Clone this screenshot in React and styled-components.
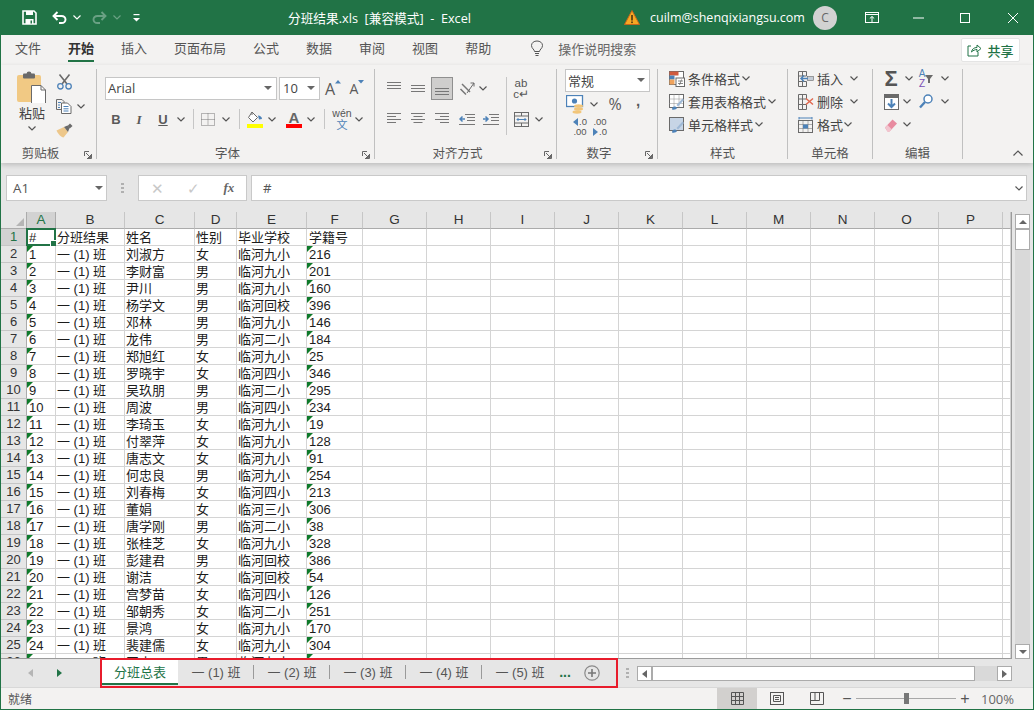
import React from "react";
import styled, { createGlobalStyle } from "styled-components";

const GREEN = "#217346";
const BLUE = "#4d82b8";
const GRAY = "#6a6a6a";

const GlobalStyle = createGlobalStyle`
  html, body { margin: 0; padding: 0; background: #fff; }
  * { box-sizing: border-box; }
`;

const Window = styled.div`
  width: 1034px;
  height: 710px;
  border: 1px solid ${GREEN};
  border-top: none;
  display: flex;
  flex-direction: column;
  overflow: hidden;
  background: #e6e6e6;
  font-family: "Open Sans", "Noto Sans CJK SC", sans-serif;
  color: #444;
`;

/* title bar */
const TitleBar = styled.div`
  height: 35px;
  flex: none;
  background: ${GREEN};
  color: #fff;
  display: flex;
  align-items: center;
  padding-left: 21px;
`;

const Slot = styled.div`
  width: ${(p) => p.$w}px;
  margin-left: ${(p) => p.$ml || 0}px;
  padding-bottom: ${(p) => p.$pb || 0}px;
  flex: none;
  display: flex;
  align-items: center;
  justify-content: center;
  height: ${(p) => (p.$h ? `${p.$h}px` : "auto")};
`;

const TitleText = styled.div`
  margin-left: 148px;
  width: 336px;
  font-size: 12.7px;
  white-space: pre;
`;

const Email = styled.div`
  width: 163px;
  margin-left: 10px;
  font-size: 12.5px;
  white-space: nowrap;
`;

const Avatar = styled.div`
  width: 24px;
  height: 24px;
  border-radius: 50%;
  background: #d2d2d2;
  color: #666;
  font-size: 12px;
  display: flex;
  align-items: center;
  justify-content: center;
`;

/* tabs */
const TabRow = styled.div`
  height: 30px;
  flex: none;
  background: #f3f2f1;
  display: flex;
  align-items: flex-start;
  padding-left: 14px;
  gap: 27px;
  font-size: 13px;
  font-family: "Noto Sans CJK SC", sans-serif;
`;

const TabItem = styled.div`
  height: 27px;
  line-height: 20px;
  padding-top: 3px;
  white-space: nowrap;
  color: ${(p) => (p.$active ? "#333" : "#555")};
  font-weight: ${(p) => (p.$active ? 700 : 400)};
  border-bottom: 2px solid ${(p) => (p.$active ? GREEN : "transparent")};
`;

const SearchHint = styled.div`
  display: flex;
  align-items: center;
  gap: 14px;
  margin-left: 12px;
  height: 27px;
  color: #666;
  white-space: nowrap;
`;

const ShareButton = styled.div`
  margin: 3px 13px 0 auto;
  width: 59px;
  height: 24px;
  background: #fff;
  border: 1px solid #e4e4e4;
  border-radius: 2px;
  display: flex;
  align-items: center;
  justify-content: center;
  gap: 5px;
  color: ${GREEN};
  font-weight: 500;
`;

/* ribbon */
const Ribbon = styled.div`
  height: 98px;
  flex: none;
  background: #f3f2f1;
  display: flex;
  padding-top: 4px;
  position: relative;
  z-index: 2;
  box-shadow: 0 2px 5px rgba(0, 0, 0, 0.18);
  font-family: "Noto Sans CJK SC", sans-serif;
`;

const Group = styled.div`
  width: ${(p) => p.$w}px;
  height: 90px;
  flex: none;
  display: flex;
  flex-direction: column;
  border-right: 1px solid #c0c0c0;
`;

const GroupBody = styled.div`
  flex: 1;
  display: flex;
  padding: ${(p) => p.$pt || 0}px 0 0 ${(p) => p.$pl || 0}px;
  min-height: 0;
`;

const GroupFooter = styled.div`
  height: 12px;
  display: flex;
  align-items: center;
`;

const GroupLabel = styled.div`
  flex: 1;
  text-align: center;
  font-size: 12.5px;
  line-height: 12px;
  color: #555;
`;

const Launcher = styled.div`
  width: 16px;
  height: 12px;
  display: flex;
  align-items: flex-end;
  justify-content: center;
`;

const Column = styled.div`
  display: flex;
  flex-direction: column;
  gap: ${(p) => p.$gap || 0}px;
  width: ${(p) => (p.$w ? `${p.$w}px` : "auto")};
  margin-left: ${(p) => p.$ml || 0}px;
  margin-top: ${(p) => p.$mt || 0}px;
  flex: none;
`;

const ToolRow = styled.div`
  display: flex;
  align-items: center;
  height: ${(p) => p.$h}px;
  flex: none;
`;

const Selector = styled.div`
  width: ${(p) => p.$w}px;
  height: 23px;
  margin-left: ${(p) => p.$ml || 0}px;
  background: #fff;
  border: 1px solid #c6c6c6;
  display: flex;
  align-items: center;
  justify-content: space-between;
  padding: 0 4px 1px ${(p) => p.$pl || 2}px;
  font-family: ${(p) => (p.$latin ? '"Open Sans", sans-serif' : '"Noto Sans CJK SC", sans-serif')};
  font-size: 13px;
  color: #444;
  flex: none;
`;

const PasteLabel = styled.div`
  font-size: 13px;
  line-height: 16px;
  color: #444;
  text-align: center;
`;

const Glyph = styled.span`
  font-family: ${(p) => p.$font || '"Liberation Sans", sans-serif'};
  font-size: ${(p) => p.$size || 13}px;
  font-weight: ${(p) => p.$weight || 400};
  font-style: ${(p) => (p.$italic ? "italic" : "normal")};
  text-decoration: ${(p) => (p.$under ? "underline" : "none")};
  color: ${(p) => p.$color || "#5a5a5a"};
  line-height: 1;
`;

const ColorGlyph = styled.div`
  display: flex;
  flex-direction: column;
  align-items: center;
  width: 16px;
  line-height: 13px;
  font-family: "Liberation Sans", sans-serif;
  font-weight: 700;
  font-size: 15px;
  color: #666;
  border-bottom: 4px solid ${(p) => p.$bar};
`;

const StackGlyph = styled.div`
  display: flex;
  flex-direction: column;
  align-items: center;
  line-height: ${(p) => p.$lh || 9}px;
  font-size: ${(p) => p.$size || 11}px;
  font-family: "Liberation Sans", sans-serif;
  color: #555;
`;

const ActiveTool = styled.div`
  width: 22px;
  height: 23px;
  background: #cfcecd;
  border: 1px solid #8f8f8f;
  display: flex;
  align-items: center;
  justify-content: center;
`;

const VSep = styled.div`
  width: 1px;
  height: ${(p) => p.$h}px;
  background: #c6c6c6;
  margin: ${(p) => p.$mt || 0}px 0 0 ${(p) => p.$ml || 0}px;
  flex: none;
`;

const CommandRow = styled.div`
  height: 23px;
  display: flex;
  align-items: center;
  font-size: 13px;
  color: #444;
  white-space: nowrap;
`;

const CommandLabel = styled.span`
  margin-left: ${(p) => p.$ml || 4}px;
  margin-right: ${(p) => p.$mr || 2}px;
`;

const CollapseSlot = styled.div`
  flex: 1;
  display: flex;
  justify-content: flex-end;
  align-items: flex-end;
  padding: 0 10px 3px 0;
  height: 90px;
`;

/* formula bar */
const FormulaBar = styled.div`
  height: 49px;
  flex: none;
  display: flex;
  align-items: flex-start;
  padding: 12px 0 0 5px;
  background: #e6e6e6;
  font-family: "Open Sans", sans-serif;
  font-size: 13.3px;
`;

const FormulaBox = styled.div`
  height: 26px;
  width: ${(p) => p.$w}px;
  margin-left: ${(p) => p.$ml || 0}px;
  background: #fff;
  border: 1px solid #c9c9c9;
  display: flex;
  align-items: center;
  justify-content: ${(p) => (p.$around ? "space-around" : "space-between")};
  padding: 0 ${(p) => (p.$around ? 0 : 3)}px 0 ${(p) => (p.$around ? 0 : p.$pl || 6)}px;
  flex: none;
  color: #555;
`;

const FxText = styled.span`
  font-family: "Liberation Serif", serif;
  font-style: italic;
  font-weight: 700;
  font-size: 13px;
  color: #666;
`;

/* sheet */
const SheetRow = styled.div`
  height: 447px;
  flex: none;
  display: flex;
`;

const Sheet = styled.div`
  width: 1011px;
  height: 447px;
  flex: none;
  overflow: hidden;
  background: #fff;
  border-right: 1px solid #9b9b9b;
  border-bottom: 1px solid #9b9b9b;
  display: grid;
  grid-template-columns: 26px 29px 69px 70px 42px 70px 56px repeat(10, 64px) 8px;
  grid-auto-rows: 17px;
  align-content: start;
  font-family: "Liberation Sans", "Noto Sans CJK SC", sans-serif;
  font-size: 13px;
  color: #1c1c1c;
`;

const ColHead = styled.div`
  background: ${(p) => (p.$on ? "#d2d2d2" : "#e6e6e6")};
  color: ${(p) => (p.$on ? GREEN : "#333")};
  border-right: 1px solid ${(p) => (p.$on ? "#ababab" : "#c6c6c6")};
  border-bottom: 1px solid ${(p) => (p.$on ? GREEN : "#ababab")};
  font-size: 13.5px;
  line-height: 16px;
  text-align: center;
  font-family: "Liberation Sans", sans-serif;
`;

const Corner = styled.div`
  background: #e6e6e6;
  border-right: 1px solid #ababab;
  border-bottom: 1px solid #ababab;
  display: flex;
  align-items: flex-end;
  justify-content: flex-end;
  padding: 0 2px 2px 0;
`;

const RowHead = styled.div`
  background: ${(p) => (p.$on ? "#d2d2d2" : "#e6e6e6")};
  color: ${(p) => (p.$on ? GREEN : "#333")};
  border-right: 1px solid #ababab;
  border-bottom: 1px solid #c6c6c6;
  font-size: 13px;
  line-height: 16px;
  text-align: center;
  font-family: "Liberation Sans", sans-serif;
`;

const Cell = styled.div`
  position: relative;
  border-right: 1px solid #d4d4d4;
  border-bottom: 1px solid #d4d4d4;
  line-height: 17px;
  padding-left: ${(p) => p.$pad || 1}px;
  white-space: nowrap;
  overflow: visible;
  ${(p) =>
    p.$note &&
    `&::before {
      content: "";
      position: absolute;
      left: 0;
      top: 0;
      border-style: solid;
      border-width: 6px 6px 0 0;
      border-color: #0e7a2a transparent transparent transparent;
    }`}
`;

const SelectionBox = styled.div`
  position: absolute;
  left: -1px;
  top: -1px;
  width: 30px;
  height: 18px;
  border: 2px solid ${GREEN};
  &::after {
    content: "";
    position: absolute;
    right: -3px;
    bottom: -3px;
    width: 5px;
    height: 5px;
    background: ${GREEN};
    border: 1px solid #fff;
  }
`;

const VScroll = styled.div`
  width: 21px;
  flex: none;
  display: flex;
  flex-direction: column;
  padding: 2px 0 0 3px;
  background: #e6e6e6;
`;

const ScrollBtn = styled.div`
  width: 15px;
  height: 15px;
  background: #fff;
  border: 1px solid #ababab;
  display: flex;
  align-items: center;
  justify-content: center;
  flex: none;
`;

const VTrack = styled.div`
  width: 15px;
  height: 416px;
  background: #d9d9d9;
`;

const VThumb = styled.div`
  width: 15px;
  height: 21px;
  background: #fff;
  border: 1px solid #ababab;
`;

/* sheet tabs */
const TabBar = styled.div`
  height: 28px;
  flex: none;
  display: flex;
  align-items: flex-start;
  background: #e6e6e6;
`;

const TabNav = styled.div`
  width: 99px;
  height: 28px;
  display: flex;
  align-items: center;
  padding-left: 27px;
  gap: 24px;
  flex: none;
`;

const TabStrip = styled.div`
  width: 518px;
  height: 30px;
  margin-top: -1px;
  border: 2px solid #e81c2c;
  position: relative;
  z-index: 3;
  display: flex;
  align-items: flex-start;
  flex: none;
  font-family: "Liberation Sans", "Noto Sans CJK SC", sans-serif;
  font-size: 13px;
  color: #555;
`;

const SheetTab = styled.div`
  width: ${(p) => p.$w || 76}px;
  height: 25px;
  flex: none;
  display: flex;
  align-items: center;
  justify-content: center;
  background: ${(p) => (p.$active ? "#fff" : "transparent")};
  color: ${(p) => (p.$active ? GREEN : "#555")};
  border-bottom: 2px solid ${(p) => (p.$active ? GREEN : "transparent")};
  white-space: pre;
  position: relative;
  ${(p) =>
    p.$sep &&
    `&::after {
      content: "";
      position: absolute;
      right: 0;
      top: 5px;
      width: 1px;
      height: 14px;
      background: #9a9a9a;
    }`}
`;

const MoreTabs = styled.div`
  width: 14px;
  height: 25px;
  text-align: center;
  font-weight: 700;
  font-size: 14px;
  line-height: 24px;
  color: ${GREEN};
  flex: none;
`;

const AddSheet = styled.div`
  width: 40px;
  height: 25px;
  display: flex;
  align-items: center;
  justify-content: center;
  flex: none;
`;

const Grip = styled.div`
  width: 19px;
  height: 28px;
  display: flex;
  align-items: center;
  justify-content: center;
  flex: none;
`;

const HScroll = styled.div`
  display: flex;
  width: 375px;
  height: 15px;
  margin-top: 7px;
  flex: none;
`;

const HThumb = styled.div`
  width: 323px;
  height: 15px;
  background: #fff;
  border: 1px solid #ababab;
`;

const HTrack = styled.div`
  width: 22px;
  height: 15px;
  background: #d9d9d9;
`;

/* status bar */
const StatusBar = styled.div`
  height: 22px;
  flex: none;
  background: #f3f2f1;
  border-top: 1px solid #d8d8d8;
  display: flex;
  align-items: center;
  font-family: "Noto Sans CJK SC", sans-serif;
  font-size: 12px;
  color: #555;
  padding-left: 7px;
`;

const StatusText = styled.div`
  width: 709px;
  flex: none;
`;

const ViewBtn = styled.div`
  width: 40px;
  height: 21px;
  display: flex;
  align-items: center;
  justify-content: center;
  background: ${(p) => (p.$on ? "#d2d0ce" : "transparent")};
  flex: none;
`;

const ZoomTrack = styled.div`
  width: 100px;
  height: 1px;
  background: #a8a8a8;
  margin-left: 2px;
  flex: none;
  display: flex;
  align-items: center;
  justify-content: center;
`;

const ZoomKnob = styled.div`
  width: 5px;
  height: 11px;
  background: #777;
  flex: none;
`;

const ZoomGlyph = styled.div`
  width: 14px;
  text-align: center;
  font-family: "Liberation Sans", sans-serif;
  font-size: 16px;
  line-height: 16px;
  color: #555;
  margin-left: ${(p) => p.$ml || 0}px;
  flex: none;
`;

const ZoomValue = styled.div`
  margin-left: 9px;
  font-family: "Open Sans", sans-serif;
  font-size: 13px;
  color: #666;
`;

const TinyArrow = styled.svg`
  align-self: flex-start;
  margin-top: 3px;
  flex: none;
`;

/* icons */
const Chevron = ({ color = "#555" }) => (
  <svg width="8" height="5" viewBox="0 0 8 5">
    <polyline points="0.5,0.5 4,4 7.5,0.5" fill="none" stroke={color} strokeWidth="1.2" />
  </svg>
);

const Caret = ({ color = "#666", up }) => (
  <svg width="8" height="4" viewBox="0 0 8 4">
    <polygon points={up ? "0,4 8,4 4,0" : "0,0 8,0 4,4"} fill={color} />
  </svg>
);

const SideArrow = ({ color = "#666", left }) => (
  <svg width="5" height="8" viewBox="0 0 5 8">
    <polygon points={left ? "5,0 5,8 0,4" : "0,0 0,8 5,4"} fill={color} />
  </svg>
);

const DialogIcon = () => (
  <svg width="8" height="8" viewBox="0 0 8 8">
    <path d="M7.5 3V7.5H3M0.5 0.5H5M0.5 0.5V5M2 2L6.5 6.5M6.5 4V6.5H4" fill="none" stroke="#666" strokeWidth="1" />
  </svg>
);

const SaveIcon = () => (
  <svg width="15" height="15" viewBox="0 0 15 15">
    <path d="M1 1H12L14 3V14H1Z" fill="none" stroke="#fff" strokeWidth="1.6" />
    <rect x="4" y="1" width="7" height="4" fill="#fff" />
    <rect x="3.5" y="9" width="8" height="5" fill="#fff" />
    <rect x="8.5" y="10.5" width="1.5" height="3" fill={GREEN} />
  </svg>
);

const UndoIcon = ({ color = "#fff", flip }) => (
  <svg width="15" height="13" viewBox="0 0 15 13" transform={flip ? "scale(-1 1)" : undefined}>
    <path d="M2 5H9.5C12 5 13.5 6.5 13.5 8.5C13.5 10.5 12 12 9.5 12H7" fill="none" stroke={color} strokeWidth="1.9" />
    <path d="M5.5 1L1.5 5L5.5 9" fill="none" stroke={color} strokeWidth="1.9" />
  </svg>
);

const QuickIcon = () => (
  <svg width="7" height="8" viewBox="0 0 7 8">
    <rect x="0.5" y="0" width="6" height="1.2" fill="#fff" />
    <polygon points="0,4 7,4 3.5,7.5" fill="#fff" />
  </svg>
);

const WarnIcon = () => (
  <svg width="16" height="15" viewBox="0 0 16 15">
    <polygon points="8,0.5 15.5,14.5 0.5,14.5" fill="#f7a823" stroke="#c8661b" strokeWidth="1" />
    <rect x="7.2" y="5" width="1.6" height="5.5" fill="#4a3410" />
    <rect x="7.2" y="11.5" width="1.6" height="1.6" fill="#4a3410" />
  </svg>
);

const RibbonToggleIcon = () => (
  <svg width="14" height="11" viewBox="0 0 14 11">
    <rect x="0.5" y="0.5" width="13" height="10" fill="none" stroke="#fff" />
    <path d="M1 2.5H13M7 10V4.5M4.8 6.5L7 4.5L9.2 6.5" fill="none" stroke="#fff" />
  </svg>
);

const MinIcon = () => (
  <svg width="12" height="2" viewBox="0 0 12 2">
    <rect width="11" height="1" y="0.5" fill="#fff" />
  </svg>
);

const MaxIcon = () => (
  <svg width="10" height="10" viewBox="0 0 10 10">
    <rect x="0.5" y="0.5" width="9" height="9" fill="none" stroke="#fff" />
  </svg>
);

const CloseIcon = () => (
  <svg width="12" height="12" viewBox="0 0 12 12">
    <path d="M1 1L11 11M11 1L1 11" stroke="#fff" strokeWidth="1" />
  </svg>
);

const BulbIcon = () => (
  <svg width="14" height="17" viewBox="0 0 14 17">
    <path d="M4.5 11.5C4.5 9.5 1.5 8.5 1.5 5.5C1.5 2.8 4 1 7 1C10 1 12.5 2.8 12.5 5.5C12.5 8.5 9.5 9.5 9.5 11.5Z" fill="none" stroke="#555" />
    <path d="M5 13.5H9M5.5 15.5H8.5" stroke="#555" />
  </svg>
);

const ShareIcon = () => (
  <svg width="15" height="14" viewBox="0 0 15 14">
    <path d="M4 3H1V13H11V9" fill="none" stroke={GREEN} />
    <path d="M4.5 9C5 6 7 4.5 10 4.5V2L14 5.5L10 9V6.5C8 6.5 6 7.5 4.5 9Z" fill="none" stroke={GREEN} />
  </svg>
);

const PasteIcon = () => (
  <svg width="30" height="32" viewBox="0 0 30 32">
    <rect x="0" y="4" width="24" height="27" rx="2" fill="#f1c984" />
    <rect x="6" y="2.5" width="12" height="5" rx="1" fill={GRAY} />
    <circle cx="12" cy="2.8" r="2.4" fill={GRAY} />
    <path d="M14.5 14.5H24L28.5 19V32.5H14.5Z" fill="#fff" stroke={GRAY} />
    <path d="M24 14.5V19H28.5" fill="none" stroke={GRAY} />
  </svg>
);

const ScissorsIcon = () => (
  <svg width="15" height="16" viewBox="0 0 15 16">
    <path d="M2.5 0.5L10 10M12.5 0.5L5 10" stroke={GRAY} strokeWidth="1.6" />
    <circle cx="3.4" cy="12.3" r="2.7" fill="none" stroke={BLUE} strokeWidth="1.3" />
    <circle cx="11.6" cy="12.3" r="2.7" fill="none" stroke={BLUE} strokeWidth="1.3" />
  </svg>
);

const CopyIcon = () => (
  <svg width="16" height="15" viewBox="0 0 16 15">
    <path d="M5 10.5H0.5V0.5H6L8 2.5V4" fill="#f3f2f1" stroke={GRAY} />
    <path d="M5.5 4H11.5L15 7.5V14.5H5.5Z" fill="#fff" stroke={GRAY} />
    <path d="M2 3.5H5M2 6H4M2 8.5H4M7.5 7.5H12.5M7.5 9.8H12.5M7.5 12H12.5" stroke={BLUE} />
  </svg>
);

const BrushIcon = () => (
  <svg width="17" height="15" viewBox="0 0 17 15">
    <path d="M0.5 7.5L8 4L12 9L7.5 14.5C5 14 2 11 0.5 7.5Z" fill="#edc78a" />
    <path d="M8 4L11.5 2.5L13.5 5L12 9Z" fill={GRAY} />
    <path d="M11.5 3L14 0.5L16.5 3L13.8 5.5Z" fill={GRAY} />
  </svg>
);

const BorderIcon = () => (
  <svg width="14" height="13" viewBox="0 0 14 13">
    <path d="M0.5 0.5H13.5V12.5H0.5ZM7 0.5V12.5M0.5 6.5H13.5" fill="none" stroke="#777" strokeDasharray="1 1" />
  </svg>
);

const FillIcon = () => (
  <svg width="16" height="13" viewBox="0 0 16 13">
    <path d="M5 1L10.5 6.5L6 11L1.5 6.5Z" fill="#fff" stroke={GRAY} />
    <path d="M5 1V4" stroke={GRAY} />
    <path d="M11 4.5C13 4.5 15 6 15 8L12 8.5Z" fill={BLUE} />
  </svg>
);

const TinyUpA = ({ down }) => (
  <TinyArrow width="6" height="4" viewBox="0 0 6 4">
    <polygon points={down ? "0,0 6,0 3,3.5" : "0,3.5 6,3.5 3,0"} fill={BLUE} />
  </TinyArrow>
);

const alignSets = {
  top: [[0, 14, 1.5], [0, 14, 4.5], [0, 14, 7.5]],
  middle: [[0, 14, 4.5], [0, 14, 7.5], [0, 14, 10.5]],
  bottom: [[0, 14, 7.5], [0, 14, 10.5], [0, 14, 13.5]],
  left: [[0, 14, 1.5], [0, 9, 4.5], [0, 14, 7.5], [0, 9, 10.5]],
  center: [[0, 14, 1.5], [2.5, 11.5, 4.5], [0, 14, 7.5], [2.5, 11.5, 10.5]],
  right: [[0, 14, 1.5], [5, 14, 4.5], [0, 14, 7.5], [5, 14, 10.5]],
};

const AlignIcon = ({ kind }) => (
  <svg width="14" height="15" viewBox="0 0 14 15">
    {alignSets[kind].map(([a, b, y]) => (
      <line key={y} x1={a} x2={b} y1={y} y2={y} stroke="#777" />
    ))}
  </svg>
);

const OrientIcon = () => (
  <svg width="16" height="16" viewBox="0 0 16 16">
    <path d="M3 3L11 11M1.5 8L7 13.5" stroke="#777" strokeWidth="1.5" fill="none" />
    <path d="M8 12L15 2M11.5 2H15V5.5" stroke={GRAY} fill="none" />
  </svg>
);

const IndentIcon = ({ out }) => (
  <svg width="16" height="13" viewBox="0 0 16 13">
    <path d="M6 1.5H16M8 4.5H16M8 7.5H16M0 11.5H16" stroke="#777" />
    <path d={out ? "M6 6H1M3.5 3.5L1 6L3.5 8.5" : "M0 6H5M2.5 3.5L5 6L2.5 8.5"} stroke={BLUE} strokeWidth="1.5" fill="none" />
  </svg>
);

const MergeIcon = () => (
  <svg width="15" height="15" viewBox="0 0 15 15">
    <rect x="0.5" y="0.5" width="14" height="14" fill="none" stroke={GRAY} />
    <path d="M0.5 4H14.5M0.5 11H14.5M7.5 0.5V4M7.5 11V14.5" stroke={GRAY} />
    <path d="M3 7.5H12M4.5 6L3 7.5L4.5 9M10.5 6L12 7.5L10.5 9" stroke={BLUE} fill="none" />
  </svg>
);

const CurrencyIcon = () => (
  <svg width="19" height="19" viewBox="0 0 19 19">
    <rect x="0.5" y="0.5" width="16" height="11" fill="#fff" stroke={BLUE} strokeWidth="1.3" />
    <circle cx="8.5" cy="6" r="2.6" fill={BLUE} />
    <ellipse cx="12.5" cy="11" rx="4.5" ry="1.7" fill="#f2c67a" />
    <ellipse cx="12.5" cy="14" rx="4.5" ry="1.7" fill="#f2c67a" />
    <ellipse cx="11" cy="17" rx="4.5" ry="1.7" fill="#f2c67a" />
  </svg>
);

const DecimalLine = styled.span`
  display: flex;
  align-items: center;
  gap: 1px;
`;

const DecimalIcon = ({ more }) => (
  <StackGlyph $size={9.5} $lh={10}>
    <DecimalLine>
      {more ? null : <SideArrow color={BLUE} left />}
      {more ? ".00" : ".0"}
    </DecimalLine>
    <DecimalLine>
      {more ? <SideArrow color={BLUE} /> : null}
      {more ? ".0" : ".00"}
    </DecimalLine>
  </StackGlyph>
);

const StyleIcon = ({ kind }) => (
  <svg width="16" height="16" viewBox="0 0 16 16">
    <rect x="0.5" y="0.5" width="14" height="13" fill="#fff" stroke={GRAY} />
    {kind === "cond" ? (
      <>
        <rect x="0.5" y="0.5" width="9" height="4" fill="#d05b3f" />
        <rect x="0.5" y="4.5" width="5" height="4" fill="#4d82b8" />
        <rect x="0.5" y="8.5" width="5" height="5" fill="#f0a35c" />
        <rect x="7" y="7" width="8.5" height="8.5" fill="#fff" stroke={GRAY} />
        <path d="M9 10H14M9 12.5H14M12.5 8.5L10.5 14" stroke={GRAY} strokeWidth="0.8" />
      </>
    ) : (
      <>
        {kind === "cell" ? (
          <rect x="1" y="1" width="13" height="12" fill="#c7d5e6" />
        ) : (
          <path d="M5 0.5V13.5M10 0.5V13.5M0.5 5H14.5M0.5 9.5H14.5" stroke="#8d8d8d" strokeDasharray="1 1" />
        )}
        <path d="M3 15.5C3 13 4.5 12 6.5 12.5L8 14C7.5 15.5 5 16 3 15.5Z" fill={BLUE} />
        <path d="M7.5 11L13.5 4.5L15 6L9 12.5Z" fill="#9fb9d6" />
      </>
    )}
  </svg>
);

const CellOpIcon = ({ kind }) => (
  <svg width="16" height="16" viewBox="0 0 16 16">
    {kind === "format" ? (
      <>
        <rect x="0.5" y="3.5" width="14" height="12" fill="none" stroke={GRAY} />
        <path d="M0.5 7.5H14.5M0.5 11.5H14.5M5 3.5V15.5M10 3.5V15.5" stroke={GRAY} strokeDasharray="1 1" />
        <rect x="5" y="7.5" width="5" height="4" fill={BLUE} />
        <path d="M1 1H14M1 0V2.5M14 0V2.5" stroke={BLUE} />
      </>
    ) : (
      <>
        <path d="M0.5 0.5H8.5V5H4.5V10.5H8.5V15.5H0.5ZM0.5 5H4.5M0.5 10.5H4.5M4.5 0.5V5M4.5 10.5V15.5" fill="none" stroke={GRAY} />
        {kind === "insert" ? (
          <>
            <rect x="9.5" y="5.5" width="6" height="4" fill="#c4ccd6" stroke={GRAY} strokeWidth="0.6" />
            <path d="M10 7.5H3M6 4.5L3 7.5L6 10.5" fill="none" stroke={BLUE} strokeWidth="1.5" />
          </>
        ) : (
          <path d="M8 4.5L15 10.5M15 4.5L8 10.5" stroke="#e0674d" strokeWidth="1.5" />
        )}
      </>
    )}
  </svg>
);

const FillDownIcon = () => (
  <svg width="15" height="16" viewBox="0 0 15 16">
    <rect x="0.5" y="0.5" width="14" height="15" fill="#fff" stroke={GRAY} />
    <rect x="0.5" y="0.5" width="14" height="3.5" fill={GRAY} />
    <path d="M7.5 5V13M4 9.5L7.5 13L11 9.5" fill="none" stroke={BLUE} strokeWidth="2" />
  </svg>
);

const SearchIcon = () => (
  <svg width="14" height="15" viewBox="0 0 14 15">
    <circle cx="9" cy="5" r="4" fill="#fff" stroke={BLUE} strokeWidth="1.5" />
    <path d="M6 8L1 13.5" stroke={BLUE} strokeWidth="2.4" />
  </svg>
);

const EraserIcon = () => (
  <svg width="14" height="14" viewBox="0 0 14 14">
    <path d="M1 9.5L8.5 1.5L13 5.5L5.5 13.5H3.5Z" fill="#e88ba0" />
    <path d="M1 9.5L3.5 7L7.5 11L5.5 13.5H3.5Z" fill="#f2c5cf" />
  </svg>
);

const FunnelIcon = () => (
  <svg width="8" height="8" viewBox="0 0 8 8">
    <path d="M0 0H8L5 4V8H3V4Z" fill={GRAY} />
  </svg>
);

const SheetCorner = () => (
  <svg width="8" height="8" viewBox="0 0 8 8">
    <polygon points="8,0 8,8 0,8" fill="#b5b5b5" />
  </svg>
);

const PlusCircle = () => (
  <svg width="16" height="16" viewBox="0 0 16 16">
    <circle cx="8" cy="8" r="7.2" fill="none" stroke="#8a8a8a" strokeWidth="1.2" />
    <path d="M8 4V12M4 8H12" stroke="#777" strokeWidth="1.6" />
  </svg>
);

const DotsIcon = () => (
  <svg width="3" height="10" viewBox="0 0 3 10">
    <rect y="0" width="3" height="2" fill="#b0b0b0" />
    <rect y="4" width="3" height="2" fill="#b0b0b0" />
    <rect y="8" width="3" height="2" fill="#b0b0b0" />
  </svg>
);

const GridView = () => (
  <svg width="13" height="13" viewBox="0 0 13 13">
    <path d="M0.5 0.5H12.5V12.5H0.5ZM4.5 0.5V12.5M8.5 0.5V12.5M0.5 4.5H12.5M0.5 8.5H12.5" fill="none" stroke="#555" />
  </svg>
);

const PageView = () => (
  <svg width="14" height="13" viewBox="0 0 14 13">
    <rect x="0.5" y="0.5" width="13" height="12" fill="none" stroke="#555" />
    <path d="M3.5 3.5H10.5V9.5H3.5ZM5 5.5H9M5 7.5H9" fill="none" stroke="#555" />
  </svg>
);

const BreakView = () => (
  <svg width="14" height="13" viewBox="0 0 14 13">
    <path d="M0.5 0.5H13.5V12.5H0.5ZM0.5 8.5H9.5V0.5M5 0.5V8.5" fill="none" stroke="#555" />
  </svg>
);

/* data */
const COLS = "ABCDEFGHIJKLMNOP".split("");
const HEADERS = ["#", "分班结果", "姓名", "性别", "毕业学校", "学籍号"];
const STUDENTS = [
  ["刘淑方", "女", "临河九小", "216"],
  ["李财富", "男", "临河九小", "201"],
  ["尹川", "男", "临河九小", "160"],
  ["杨学文", "男", "临河回校", "396"],
  ["邓林", "男", "临河九小", "146"],
  ["龙伟", "男", "临河二小", "184"],
  ["郑旭红", "女", "临河九小", "25"],
  ["罗晓宇", "女", "临河四小", "346"],
  ["吴玖朋", "男", "临河二小", "295"],
  ["周波", "男", "临河四小", "234"],
  ["李琦玉", "女", "临河九小", "19"],
  ["付翠萍", "女", "临河九小", "128"],
  ["唐志文", "女", "临河九小", "91"],
  ["何忠良", "男", "临河九小", "254"],
  ["刘春梅", "女", "临河四小", "213"],
  ["董娟", "女", "临河三小", "306"],
  ["唐学刚", "男", "临河二小", "38"],
  ["张桂芝", "女", "临河九小", "328"],
  ["彭建君", "男", "临河回校", "386"],
  ["谢洁", "女", "临河回校", "54"],
  ["宫梦苗", "女", "临河四小", "126"],
  ["邹朝秀", "女", "临河二小", "251"],
  ["景鸿", "女", "临河九小", "170"],
  ["裴建儒", "女", "临河九小", "304"],
  ["田小", "男", "临河九小", "196"],
];
const RIBBON_TABS = ["文件", "开始", "插入", "页面布局", "公式", "数据", "审阅", "视图", "帮助"];
const SHEET_TABS = ["一 (1) 班", "一 (2) 班", "一 (3) 班", "一 (4) 班", "一 (5) 班"];
const BLANKS = Array.from({ length: 11 });

const GridHeader = () => (
  <>
    <Corner>
      <SheetCorner />
    </Corner>
    {COLS.map((c, i) => (
      <ColHead key={c} $on={i === 0}>
        {c}
      </ColHead>
    ))}
    <ColHead />
  </>
);

const HeaderRow = () => (
  <>
    <RowHead $on>1</RowHead>
    {HEADERS.map((h, i) => (
      <Cell key={h} $pad={i === 0 || i === 5 ? 2 : 1}>
        {h}
        {i === 0 && <SelectionBox />}
      </Cell>
    ))}
    {BLANKS.map((_, i) => (
      <Cell key={i} />
    ))}
  </>
);

const StudentRow = ({ index, student }) => (
  <>
    <RowHead>{index + 2}</RowHead>
    <Cell $note $pad={2}>
      {index + 1}
    </Cell>
    <Cell>一 (1) 班</Cell>
    <Cell>{student[0]}</Cell>
    <Cell>{student[1]}</Cell>
    <Cell>{student[2]}</Cell>
    <Cell $note $pad={2}>
      {student[3]}
    </Cell>
    {BLANKS.map((_, i) => (
      <Cell key={i} />
    ))}
  </>
);

const ClipboardGroup = () => (
  <Group $w={96}>
    <GroupBody $pl={12}>
      <Column $w={38}>
        <Slot $w={38} $h={36}>
          <PasteIcon />
        </Slot>
        <PasteLabel>粘贴</PasteLabel>
        <Slot $w={38} $h={14}>
          <Chevron />
        </Slot>
      </Column>
      <Column $ml={2}>
        <ToolRow $h={25}>
          <Slot $w={22}>
            <ScissorsIcon />
          </Slot>
        </ToolRow>
        <ToolRow $h={24}>
          <Slot $w={22}>
            <CopyIcon />
          </Slot>
          <Slot $w={8} $ml={2}>
            <Chevron />
          </Slot>
        </ToolRow>
        <ToolRow $h={24}>
          <Slot $w={22}>
            <BrushIcon />
          </Slot>
        </ToolRow>
      </Column>
    </GroupBody>
    <GroupFooter>
      <GroupLabel>剪贴板</GroupLabel>
      <Launcher>
        <DialogIcon />
      </Launcher>
    </GroupFooter>
  </Group>
);

const FontGroup = () => (
  <Group $w={278}>
    <GroupBody $pl={8} $pt={8}>
      <Column $gap={7}>
        <ToolRow $h={23}>
          <Selector $w={172} $latin>
            Arial
            <Caret />
          </Selector>
          <Selector $w={41} $ml={2} $latin $pl={3}>
            10
            <Caret />
          </Selector>
          <Slot $w={20} $ml={3} $h={23}>
            <Glyph $size={16} $font='"Open Sans", sans-serif'>A</Glyph>
            <TinyUpA />
          </Slot>
          <Slot $w={20} $ml={4} $h={23}>
            <Glyph $size={14} $font='"Open Sans", sans-serif'>A</Glyph>
            <TinyUpA down />
          </Slot>
        </ToolRow>
        <ToolRow $h={24}>
          <Slot $w={22}>
            <Glyph $weight={700}>B</Glyph>
          </Slot>
          <Slot $w={24}>
            <Glyph $italic $weight={700} $font='"Liberation Serif", serif'>I</Glyph>
          </Slot>
          <Slot $w={24}>
            <Glyph $under $weight={700}>U</Glyph>
          </Slot>
          <Slot $w={8} $ml={2}>
            <Chevron />
          </Slot>
          <Slot $w={2} $ml={7}>
            <VSep $h={20} />
          </Slot>
          <Slot $w={16} $ml={6}>
            <BorderIcon />
          </Slot>
          <Slot $w={8} $ml={6}>
            <Chevron />
          </Slot>
          <Slot $w={2} $ml={8}>
            <VSep $h={20} />
          </Slot>
          <Slot $w={26} $ml={2}>
            <Column>
              <FillIcon />
              <ColorGlyph $bar="#ffff00" />
            </Column>
          </Slot>
          <Slot $w={8}>
            <Chevron />
          </Slot>
          <Slot $w={20} $ml={8}>
            <ColorGlyph $bar="#ff0000">A</ColorGlyph>
          </Slot>
          <Slot $w={8} $ml={3}>
            <Chevron />
          </Slot>
          <Slot $w={2} $ml={8}>
            <VSep $h={20} />
          </Slot>
          <Slot $w={20} $ml={7}>
            <StackGlyph $size={10.5} $lh={11}>
              wén
              <Glyph $size={11} $color={BLUE} $font='"Noto Sans CJK SC", sans-serif'>文</Glyph>
            </StackGlyph>
          </Slot>
          <Slot $w={8} $ml={3}>
            <Chevron />
          </Slot>
        </ToolRow>
      </Column>
    </GroupBody>
    <GroupFooter>
      <GroupLabel>字体</GroupLabel>
      <Launcher>
        <DialogIcon />
      </Launcher>
    </GroupFooter>
  </Group>
);

const AlignGroup = () => (
  <Group $w={182}>
    <GroupBody $pl={7} $pt={8}>
      <Column $gap={7} $w={124}>
        <ToolRow $h={23}>
          <Slot $w={24}>
            <AlignIcon kind="top" />
          </Slot>
          <Slot $w={24}>
            <AlignIcon kind="middle" />
          </Slot>
          <Slot $w={24}>
            <ActiveTool>
              <AlignIcon kind="bottom" />
            </ActiveTool>
          </Slot>
          <Slot $w={24} $ml={1}>
            <OrientIcon />
          </Slot>
          <Slot $w={8}>
            <Chevron />
          </Slot>
        </ToolRow>
        <ToolRow $h={24}>
          <Slot $w={24}>
            <AlignIcon kind="left" />
          </Slot>
          <Slot $w={24}>
            <AlignIcon kind="center" />
          </Slot>
          <Slot $w={24}>
            <AlignIcon kind="right" />
          </Slot>
          <Slot $w={24} $ml={1}>
            <IndentIcon out />
          </Slot>
          <Slot $w={24}>
            <IndentIcon />
          </Slot>
        </ToolRow>
      </Column>
      <VSep $h={58} />
      <Column $gap={7}>
        <ToolRow $h={23}>
          <Slot $w={28}>
            <StackGlyph $size={11.5} $lh={11}>
              ab
              <span>c↵</span>
            </StackGlyph>
          </Slot>
        </ToolRow>
        <ToolRow $h={24}>
          <Slot $w={28}>
            <MergeIcon />
          </Slot>
          <Slot $w={8}>
            <Chevron />
          </Slot>
        </ToolRow>
      </Column>
    </GroupBody>
    <GroupFooter>
      <GroupLabel>对齐方式</GroupLabel>
      <Launcher>
        <DialogIcon />
      </Launcher>
    </GroupFooter>
  </Group>
);

const NumberGroup = () => (
  <Group $w={101}>
    <GroupBody $pl={8}>
      <Column>
        <ToolRow $h={23}>
          <Selector $w={85}>
            常规
            <Caret />
          </Selector>
        </ToolRow>
        <ToolRow $h={24}>
          <Slot $w={20}>
            <CurrencyIcon />
          </Slot>
          <Slot $w={8} $ml={5}>
            <Chevron />
          </Slot>
          <Slot $w={22} $ml={6}>
            <Glyph $size={16} $font='"Open Sans", sans-serif'>%</Glyph>
          </Slot>
          <Slot $w={16} $ml={4} $pb={7}>
            <Glyph $size={15} $weight={700}>,</Glyph>
          </Slot>
        </ToolRow>
        <ToolRow $h={22}>
          <Slot $w={22} $ml={4}>
            <DecimalIcon />
          </Slot>
          <Slot $w={18}>
            <DecimalIcon more />
          </Slot>
        </ToolRow>
      </Column>
    </GroupBody>
    <GroupFooter>
      <GroupLabel>数字</GroupLabel>
      <Launcher>
        <DialogIcon />
      </Launcher>
    </GroupFooter>
  </Group>
);

const StylesGroup = () => (
  <Group $w={130}>
    <GroupBody $pl={11}>
      <Column $mt={-2}>
        <CommandRow>
          <StyleIcon kind="cond" />
          <CommandLabel $ml={3}>条件格式</CommandLabel>
          <Chevron />
        </CommandRow>
        <CommandRow>
          <StyleIcon kind="table" />
          <CommandLabel $ml={3}>套用表格格式</CommandLabel>
          <Chevron />
        </CommandRow>
        <CommandRow>
          <StyleIcon kind="cell" />
          <CommandLabel $ml={3}>单元格样式</CommandLabel>
          <Chevron />
        </CommandRow>
      </Column>
    </GroupBody>
    <GroupFooter>
      <GroupLabel>样式</GroupLabel>
    </GroupFooter>
  </Group>
);

const CellsGroup = () => (
  <Group $w={85}>
    <GroupBody $pl={10}>
      <Column $mt={-2}>
        <CommandRow>
          <CellOpIcon kind="insert" />
          <CommandLabel $ml={3} $mr={7}>插入</CommandLabel>
          <Chevron />
        </CommandRow>
        <CommandRow>
          <CellOpIcon kind="delete" />
          <CommandLabel $ml={3} $mr={7}>删除</CommandLabel>
          <Chevron />
        </CommandRow>
        <CommandRow>
          <CellOpIcon kind="format" />
          <CommandLabel $ml={3} $mr={1}>格式</CommandLabel>
          <Chevron />
        </CommandRow>
      </Column>
    </GroupBody>
    <GroupFooter>
      <GroupLabel>单元格</GroupLabel>
    </GroupFooter>
  </Group>
);

const EditGroup = () => (
  <Group $w={90}>
    <GroupBody $pl={8}>
      <Column $mt={-2}>
        <CommandRow>
          <Slot $w={20}>
            <Glyph $size={22} $weight={700} $color="#555">Σ</Glyph>
          </Slot>
          <Slot $w={8} $ml={4}>
            <Chevron />
          </Slot>
          <Slot $w={20} $ml={3}>
            <StackGlyph $size={10} $lh={10}>
              <Glyph $size={10} $color={BLUE}>A</Glyph>
              <Glyph $size={10} $color="#7a4fb5">Z</Glyph>
            </StackGlyph>
            <FunnelIcon />
          </Slot>
          <Slot $w={8} $ml={5}>
            <Chevron />
          </Slot>
        </CommandRow>
        <CommandRow>
          <Slot $w={20}>
            <FillDownIcon />
          </Slot>
          <Slot $w={8} $ml={2}>
            <Chevron />
          </Slot>
          <Slot $w={20} $ml={5}>
            <SearchIcon />
          </Slot>
          <Slot $w={8} $ml={5}>
            <Chevron />
          </Slot>
        </CommandRow>
        <CommandRow>
          <Slot $w={20}>
            <EraserIcon />
          </Slot>
          <Slot $w={8} $ml={2}>
            <Chevron />
          </Slot>
        </CommandRow>
      </Column>
    </GroupBody>
    <GroupFooter>
      <GroupLabel>编辑</GroupLabel>
    </GroupFooter>
  </Group>
);

const App = () => {
  return (
    <Window>
      <GlobalStyle />
      <TitleBar>
        <Slot $w={15}>
          <SaveIcon />
        </Slot>
        <Slot $w={15} $ml={15}>
          <UndoIcon />
        </Slot>
        <Slot $w={8} $ml={6}>
          <Chevron color="#fff" />
        </Slot>
        <Slot $w={15} $ml={11}>
          <UndoIcon color="#6aa184" flip />
        </Slot>
        <Slot $w={8} $ml={6}>
          <Chevron color="#6aa184" />
        </Slot>
        <Slot $w={8} $ml={11}>
          <QuickIcon />
        </Slot>
        <TitleText>{"分班结果.xls  [兼容模式]  -  Excel"}</TitleText>
        <WarnIcon />
        <Email>cuilm@shenqixiangsu.com</Email>
        <Avatar>C</Avatar>
        <Slot $w={14} $ml={28}>
          <RibbonToggleIcon />
        </Slot>
        <Slot $w={12} $ml={34}>
          <MinIcon />
        </Slot>
        <Slot $w={10} $ml={35}>
          <MaxIcon />
        </Slot>
        <Slot $w={12} $ml={37}>
          <CloseIcon />
        </Slot>
      </TitleBar>

      <TabRow>
        {RIBBON_TABS.map((t) => (
          <TabItem key={t} $active={t === "开始"}>
            {t}
          </TabItem>
        ))}
        <SearchHint>
          <BulbIcon />
          操作说明搜索
        </SearchHint>
        <ShareButton>
          <ShareIcon />
          共享
        </ShareButton>
      </TabRow>

      <Ribbon>
        <ClipboardGroup />
        <FontGroup />
        <AlignGroup />
        <NumberGroup />
        <StylesGroup />
        <CellsGroup />
        <EditGroup />
        <CollapseSlot>
          <svg width="10" height="6" viewBox="0 0 10 6">
            <polyline points="0.5,5.5 5,1 9.5,5.5" fill="none" stroke="#555" strokeWidth="1.2" />
          </svg>
        </CollapseSlot>
      </Ribbon>

      <FormulaBar>
        <FormulaBox $w={101}>
          A1
          <Caret />
        </FormulaBox>
        <Slot $w={31} $h={26}>
          <DotsIcon />
        </Slot>
        <FormulaBox $w={109} $around>
          <Glyph $size={15} $color="#c8c8c8">✕</Glyph>
          <Glyph $size={15} $color="#c8c8c8">✓</Glyph>
          <FxText>fx</FxText>
        </FormulaBox>
        <FormulaBox $w={776} $ml={4} $pl={11}>
          #
          <Chevron />
        </FormulaBox>
      </FormulaBar>

      <SheetRow>
        <Sheet>
          <GridHeader />
          <HeaderRow />
          {STUDENTS.map((s, i) => (
            <StudentRow key={i} index={i} student={s} />
          ))}
        </Sheet>
        <VScroll>
          <ScrollBtn>
            <Caret up />
          </ScrollBtn>
          <VTrack>
            <VThumb />
          </VTrack>
          <ScrollBtn>
            <Caret />
          </ScrollBtn>
        </VScroll>
      </SheetRow>

      <TabBar>
        <TabNav>
          <SideArrow color="#b5b5b5" left />
          <SideArrow color={GREEN} />
        </TabNav>
        <TabStrip>
          <SheetTab $active>分班总表</SheetTab>
          {SHEET_TABS.map((t, i) => (
            <SheetTab key={t} $sep={i < 4}>
              {t}
            </SheetTab>
          ))}
          <MoreTabs>...</MoreTabs>
          <AddSheet>
            <PlusCircle />
          </AddSheet>
        </TabStrip>
        <Grip>
          <DotsIcon />
        </Grip>
        <HScroll>
          <ScrollBtn>
            <SideArrow left />
          </ScrollBtn>
          <HThumb />
          <HTrack />
          <ScrollBtn>
            <SideArrow />
          </ScrollBtn>
        </HScroll>
      </TabBar>

      <StatusBar>
        <StatusText>就绪</StatusText>
        <ViewBtn $on>
          <GridView />
        </ViewBtn>
        <ViewBtn>
          <PageView />
        </ViewBtn>
        <ViewBtn>
          <BreakView />
        </ViewBtn>
        <ZoomGlyph $ml={3}>−</ZoomGlyph>
        <ZoomTrack>
          <ZoomKnob />
        </ZoomTrack>
        <ZoomGlyph $ml={2}>+</ZoomGlyph>
        <ZoomValue>100%</ZoomValue>
      </StatusBar>
    </Window>
  );
};

export default App;
